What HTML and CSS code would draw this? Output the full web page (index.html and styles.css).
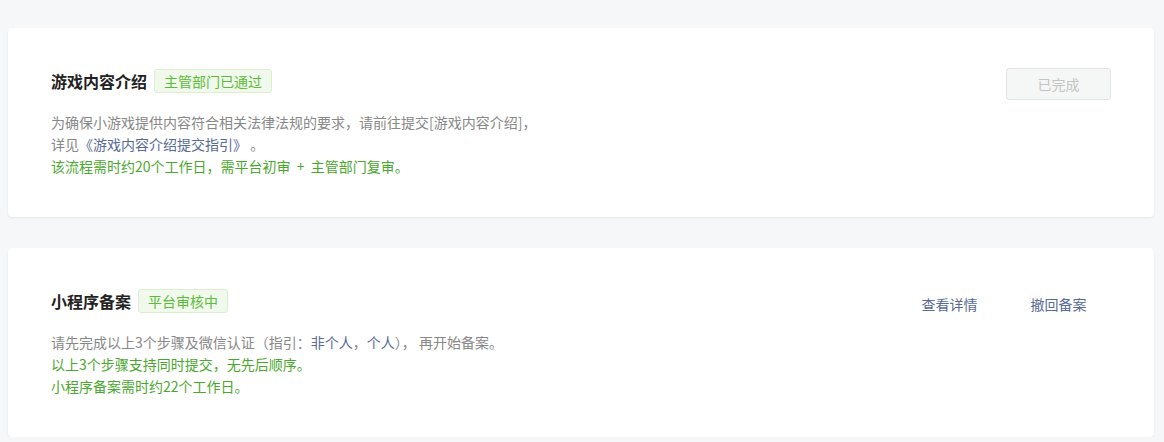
FILE: index.html
```html
<!DOCTYPE html>
<html lang="zh-CN">
<head>
<meta charset="utf-8">
<title>备案</title>
<link rel="stylesheet" href="styles.css">
</head>
<body>
<div class="page">
  <section class="card">
    <div class="main">
      <div class="head">
        <h2 class="title">游戏内容介绍</h2>
        <span class="tag">主管部门已通过</span>
      </div>
      <div class="desc">
        <p class="gray">为确保小游戏提供内容符合相关法律法规的要求，请前往提交[游戏内容介绍]，</p>
        <p class="gray">详见<a class="link">《游戏内容介绍提交指引》</a> 。</p>
        <p class="green">该流程需时约20个工作日，需平台初审 &nbsp;+&nbsp; 主管部门复审。</p>
      </div>
    </div>
    <div class="actions">
      <button class="btn btn-disabled">已完成</button>
    </div>
  </section>
  <section class="card">
    <div class="main">
      <div class="head">
        <h2 class="title">小程序备案</h2>
        <span class="tag">平台审核中</span>
      </div>
      <div class="desc">
        <p class="gray">请先完成以上3个步骤及微信认证（指引：<a class="link">非个人</a>，<a class="link">个人</a>）， 再开始备案。</p>
        <p class="green">以上3个步骤支持同时提交，无先后顺序。</p>
        <p class="green">小程序备案需时约22个工作日。</p>
      </div>
    </div>
    <div class="actions">
      <button class="btn btn-text">查看详情</button>
      <button class="btn btn-text">撤回备案</button>
    </div>
  </section>
</div>
</body>
</html>
```
FILE: styles.css
```css
html, body {
  margin: 0;
  padding: 0;
  background: #f6f7f9;
}
body {
  font-family: "Noto Sans CJK SC", "Microsoft YaHei", sans-serif;
  font-size: 14px;
  color: #353535;
}
.page {
  padding: 28px 10px 0 8px;
  display: flex;
  flex-direction: column;
  gap: 31px;
}
.card {
  background: #fff;
  border-radius: 4px;
  box-shadow: 0 1px 2px rgba(0, 0, 0, 0.08);
  height: 189px;
  box-sizing: border-box;
  padding: 40px 43px 0 43px;
  display: flex;
  justify-content: space-between;
  align-items: flex-start;
}
.head {
  display: flex;
  align-items: center;
  height: 26px;
  gap: 7px;
}
.title {
  margin: 0;
  font-size: 16px;
  font-weight: bold;
  color: #222;
  line-height: 26px;
}
.tag {
  box-sizing: border-box;
  height: 24px;
  line-height: 22px;
  padding: 0 9px;
  font-size: 14px;
  color: #5cbb3a;
  background: #f0f9eb;
  border: 1px solid #dcf0d0;
  border-radius: 3px;
}
.desc {
  margin-top: 17px;
}
.desc p {
  margin: 0;
  line-height: 22px;
  font-size: 14px;
}
.gray { color: #888; }
.green { color: #4ba82e; }
.link {
  color: #576b95;
  text-decoration: none;
}
.actions {
  display: flex;
  gap: 4px;
}
.btn {
  box-sizing: border-box;
  width: 105px;
  height: 32px;
  font-family: inherit;
  font-size: 14px;
  border-radius: 3px;
  padding: 0;
  background: transparent;
  border: 1px solid transparent;
}
.btn-disabled {
  background: #f5f6f6;
  border-color: #e3e4e5;
  color: #c3c3c3;
}
.btn-text {
  color: #576b95;
}
```
